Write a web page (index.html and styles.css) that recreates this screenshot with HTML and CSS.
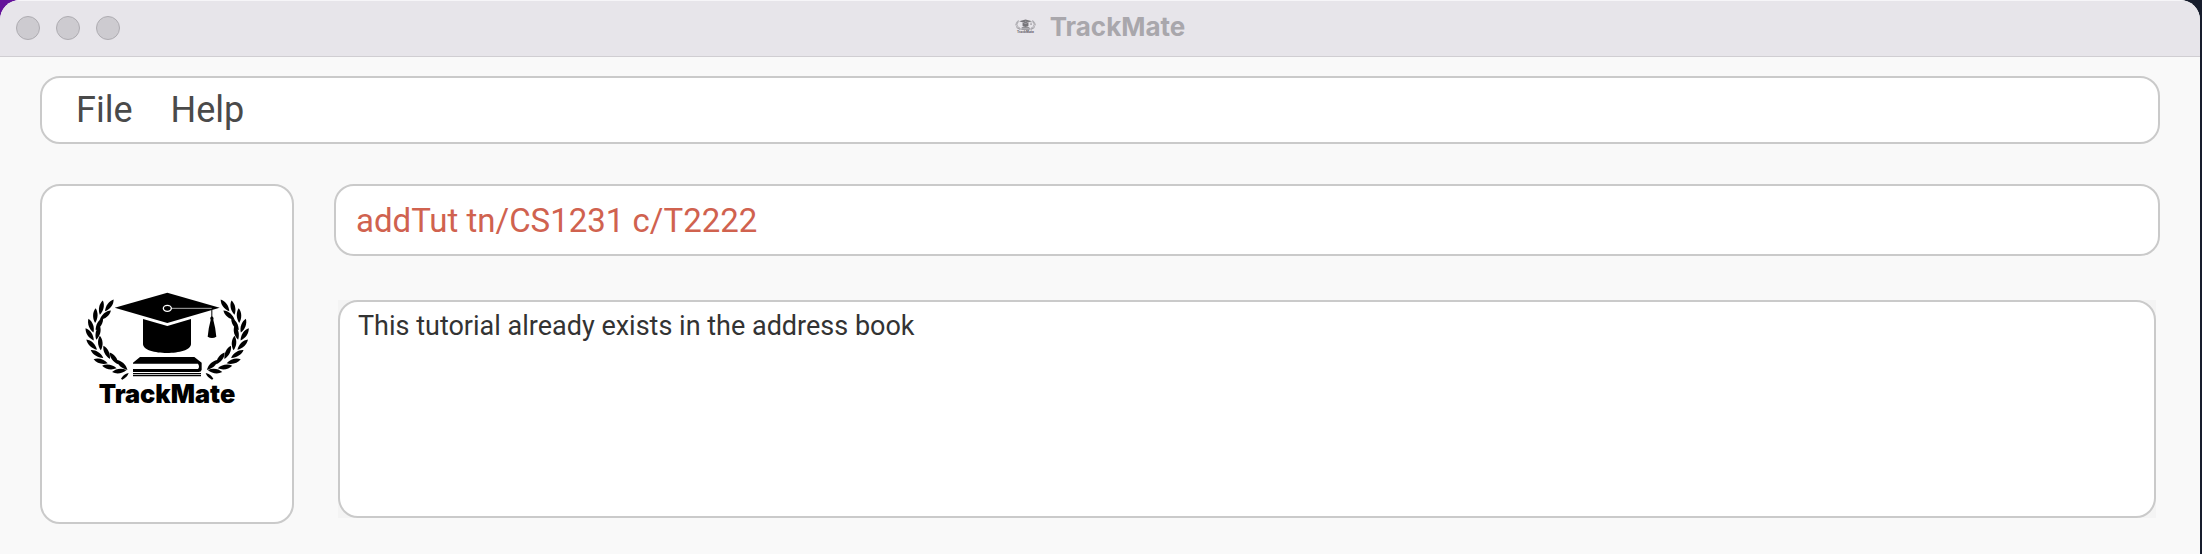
FILE: index.html
```html
<!DOCTYPE html>
<html lang="en">
<head>
<meta charset="utf-8">
<title>TrackMate</title>
<link rel="stylesheet" href="styles.css">
</head>
<body>
<svg class="defs" aria-hidden="true">
  <defs>
    <path id="leaf" d="M0 -22 C9 -10 9 8 0 22 C-9 8 -9 -10 0 -22Z"/>
    <g id="laurel">
      <use href="#leaf" transform="translate(118 91) rotate(36)"/>
      <use href="#leaf" transform="translate(94 98) rotate(12)"/>
      <use href="#leaf" transform="translate(106 121) rotate(50)"/>
      <use href="#leaf" transform="translate(76 122) rotate(2)"/>
      <use href="#leaf" transform="translate(88 147) rotate(30)"/>
      <use href="#leaf" transform="translate(63 152) rotate(-20)"/>
      <use href="#leaf" transform="translate(84 173) rotate(14)"/>
      <use href="#leaf" transform="translate(59 178) rotate(-34)"/>
      <use href="#leaf" transform="translate(91 204) rotate(-4)"/>
      <use href="#leaf" transform="translate(65 209) rotate(-46)"/>
      <use href="#leaf" transform="translate(110 232) rotate(-26)"/>
      <use href="#leaf" transform="translate(81 237) rotate(-58)"/>
      <use href="#leaf" transform="translate(132 250) rotate(-36)"/>
      <use href="#leaf" transform="translate(92 259) rotate(-74)"/>
      <use href="#leaf" transform="translate(156 270) rotate(-48)"/>
      <use href="#leaf" transform="translate(118 276) rotate(-80)"/>
      <use href="#leaf" transform="translate(148 288) rotate(-98)"/>
      <path d="M153 311 Q160 298 176 294 Q172 306 157 314Z"/>
    </g>
    <symbol id="logo" viewBox="36 42 510 390">
      <use href="#laurel"/>
      <use href="#laurel" transform="translate(583 0) scale(-1 1)"/>
      <path d="M134 98 L292 53 L449 98 L292 144Z"/>
      <path d="M219 132 L292 153 L363 132 V207 C363 243 219 243 219 207Z"/>
      <g fill="none" stroke="#fff" stroke-width="4">
        <ellipse cx="292" cy="100" rx="12" ry="9"/>
        <path d="M304 100 H425" stroke-width="2"/>
      </g>
      <path d="M424 104 h3 v20 q6 5 3 11 q7 25 9 50 q-13 8 -26 0 q2 -25 9 -50 q-4 -6 2 -11Z"/>
      <path d="M210 246 H373 L395 263 V284 Q394 291 386 291 H189 V282 H384 Q390 275 384 266 H189 V263Z"/>
      <path d="M189 294 H393 V298 H189Z M189 300 H393 V304 H189Z"/>
      <text x="291" y="385" text-anchor="middle" class="logo-text">TrackMate</text>
    </symbol>
  </defs>
</svg>
<div class="desktop">
  <div class="window">
    <header class="titlebar">
      <div class="controls">
        <button class="control" aria-label="Close"></button>
        <button class="control" aria-label="Minimise"></button>
        <button class="control" aria-label="Zoom"></button>
      </div>
      <h1 class="title"><svg class="title-icon" aria-hidden="true"><use href="#logo"/></svg>TrackMate</h1>
    </header>
    <main class="content">
      <nav class="panel menu">
        <button class="menu-item">File</button>
        <button class="menu-item">Help</button>
      </nav>
      <div class="columns">
        <div class="panel brand"><svg class="brand-logo" role="img" aria-label="TrackMate logo"><use href="#logo"/></svg></div>
        <div class="console">
          <input class="panel command" aria-label="Command" value="addTut tn/CS1231 c/T2222" spellcheck="false">
          <div class="result-area"><textarea class="panel result" aria-label="Result" readonly>This tutorial already exists in the address book</textarea></div>
        </div>
      </div>
    </main>
  </div>
</div>
</body>
</html>
```
FILE: styles.css
```css
* { box-sizing: border-box; }
body { margin: 0; font-family: Roboto, Inter, "Liberation Sans", sans-serif; }
button, input, textarea { font: inherit; margin: 0; }
.defs { position: absolute; width: 0; height: 0; }
.desktop {
  min-height: 100vh;
  display: flex;
  padding-right: 2px;
  background: linear-gradient(90deg, #64129a 0 50%, #161c2c 50%);
}
.window {
  flex: 1;
  background: #f9f9f9;
  border-radius: 20px 20px 0 0;
  overflow: hidden;
}
.titlebar {
  display: grid;
  grid-template-columns: 1fr auto 1fr;
  align-items: center;
  height: 57px;
  padding: 0 16px 2px;
  background: #e7e5ea;
  border-top: 1px solid #f6f5f8;
  border-bottom: 1px solid #d0ced2;
}
.controls { display: flex; gap: 16px; }
.control {
  width: 24px;
  height: 24px;
  padding: 0;
  border: 1px solid #aeacb1;
  border-radius: 50%;
  background: #cdcbd0;
}
.title {
  display: flex;
  align-items: center;
  gap: 14px;
  margin: 0;
  padding-bottom: 2px;
  color: #a9a7ac;
  font-family: Inter, sans-serif;
  font-size: 26px;
  line-height: 32px;
  font-weight: 700;
}
.title-icon { width: 21px; height: 16px; fill: #77757a; }
.content { padding: 19px 40px 30px; }
.panel {
  background: #fff;
  border: 2px solid #cacaca;
  border-radius: 20px;
}
.menu {
  display: flex;
  align-items: center;
  gap: 38px;
  height: 68px;
  padding: 0 34px;
}
.menu-item {
  padding: 0;
  border: 0;
  background: none;
  color: #4a4a4a;
  font-size: 36px;
}
.columns { display: flex; gap: 40px; margin-top: 40px; }
.brand {
  display: flex;
  align-items: center;
  justify-content: center;
  width: 254px;
  height: 340px;
}
.brand-logo { width: 170px; height: 130px; }
.logo-text { font-family: Inter, sans-serif; font-size: 76px; font-weight: 900; }
.console { flex: 1; display: flex; flex-direction: column; gap: 44px; }
.command {
  width: 100%;
  height: 72px;
  padding: 0 20px;
  color: #d0624f;
  font-size: 33px;
  outline: 0;
}
.result-area { display: flex; margin: 0 4px; background: #f4f4f4; }
.result {
  flex: 1;
  height: 218px;
  padding: 6px 18px;
  color: #333;
  font-size: 27px;
  line-height: 36px;
  resize: none;
  outline: 0;
}
```
